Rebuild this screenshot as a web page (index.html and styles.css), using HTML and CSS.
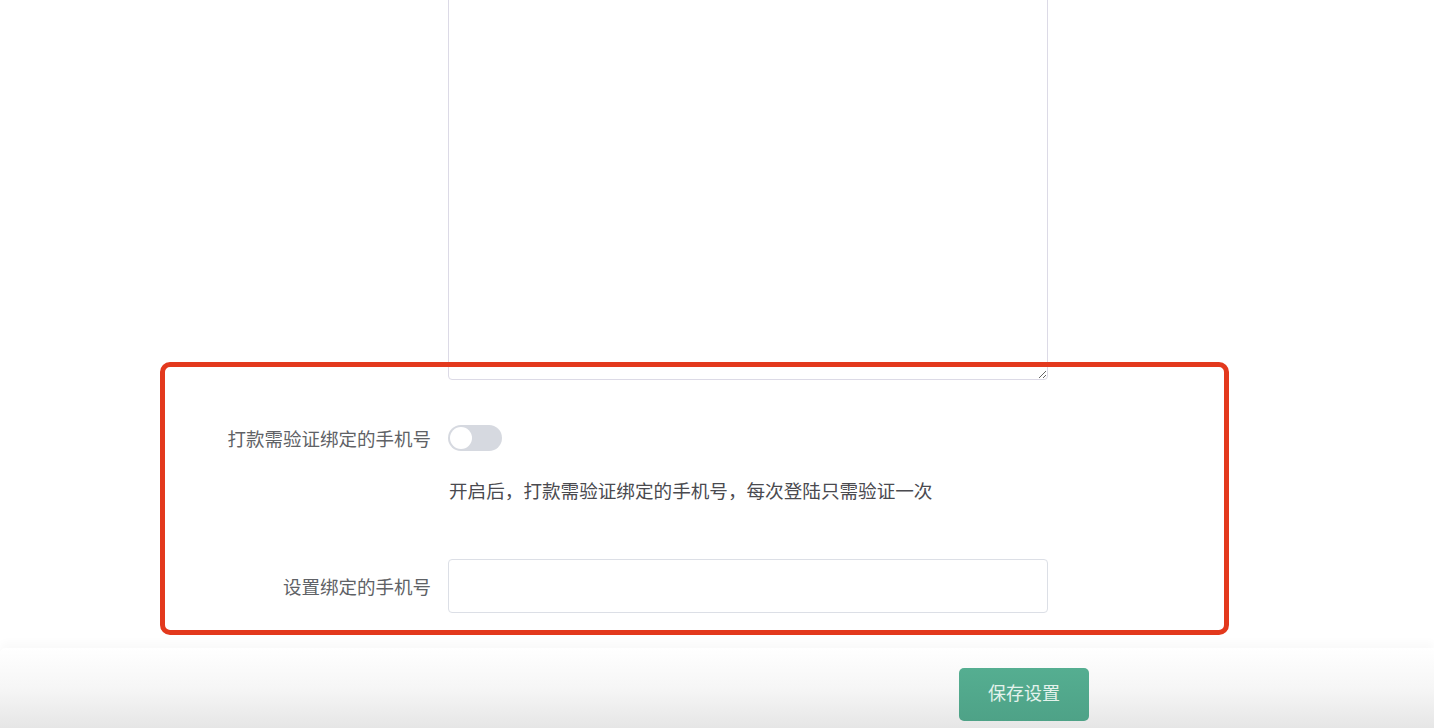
FILE: index.html
```html
<!DOCTYPE html>
<html lang="zh-CN">
<head>
  <meta charset="UTF-8" />
  <meta name="viewport" content="width=device-width, initial-scale=1.0"/>
  <title>打款设置</title>
  <link rel="stylesheet" href="styles.css">
</head>
<body>

<div class="page">
  <form class="settings-form">
    <div class="form-item form-item-area">
      <label class="form-label"></label>
      <div class="form-content">
        <textarea class="form-textarea"></textarea>
      </div>
    </div>

    <div class="form-item form-item-switch">
      <label class="form-label">打款需验证绑定的手机号</label>
      <div class="form-content">
        <span class="switch"><span class="switch-knob"></span></span>
        <p class="form-help">开启后，打款需验证绑定的手机号，每次登陆只需验证一次</p>
      </div>
    </div>

    <div class="form-item form-item-phone">
      <label class="form-label">设置绑定的手机号</label>
      <div class="form-content">
        <input type="text" class="form-input" />
      </div>
    </div>
  </form>

  <!-- 标注框 -->
  <div class="highlight-box"></div>

  <div class="footer-bar">
    <button type="button" class="save-btn">保存设置</button>
  </div>
</div>

</body>
</html>
```

FILE: styles.css
```css
* {
  box-sizing: border-box;
}

body {
  margin: 0;
  font-family: "Noto Sans CJK SC", "Noto Sans", sans-serif;
  background: #fff;
  overflow: hidden;
}

.page {
  position: relative;
  height: 728px;
  display: flex;
  flex-direction: column;
}

.settings-form {
  flex: 1;
  margin-top: -20px;
}

.form-item {
  display: flex;
  align-items: flex-start;
}

.form-label {
  width: 448px;
  padding-right: 17px;
  text-align: right;
  font-size: 18.5px;
  color: #606266;
  line-height: 26px;
  flex-shrink: 0;
}

.form-content {
  width: 600px;
}

.form-textarea {
  display: block;
  width: 600px;
  height: 400px;
  border: 1px solid #dcdae6;
  border-radius: 4px;
  resize: vertical;
  font-family: inherit;
}

.form-item-switch {
  margin-top: 45px;
}

.switch {
  display: block;
  width: 54px;
  height: 26px;
  border-radius: 13px;
  background: #d6d9e0;
  position: relative;
}

.switch-knob {
  position: absolute;
  top: 2px;
  left: 2px;
  width: 22px;
  height: 22px;
  border-radius: 50%;
  background: #fff;
}

.form-help {
  margin: 26px 0 0 1px;
  font-size: 18.6px;
  line-height: 26px;
  color: #4a4a4f;
}

.form-item-phone {
  margin-top: 56px;
  align-items: center;
}

.form-input {
  width: 600px;
  height: 54px;
  border: 1px solid #dcdfe6;
  border-radius: 4px;
  font-size: 16px;
  padding: 0 14px;
}

.highlight-box {
  position: absolute;
  left: 160px;
  top: 362px;
  width: 1069px;
  height: 273px;
  border: 5px solid #e3391d;
  border-radius: 10px;
  pointer-events: none;
}

.footer-bar {
  height: 80px;
  padding: 20px 0 0 959px;
  background: linear-gradient(#fff 0%, #f6f6f6 50%, #e6e6e6 100%);
  border-top-left-radius: 6px;
  box-shadow: 0 -6px 8px rgba(0,0,0,0.025);
}

.save-btn {
  width: 130px;
  height: 53px;
  padding: 0 0 6px;
  border: none;
  border-radius: 5px;
  background: linear-gradient(#55ae91, #4ea287);
  color: #e4f2ec;
  font-family: inherit;
  font-size: 18px;
  cursor: pointer;
}
```
